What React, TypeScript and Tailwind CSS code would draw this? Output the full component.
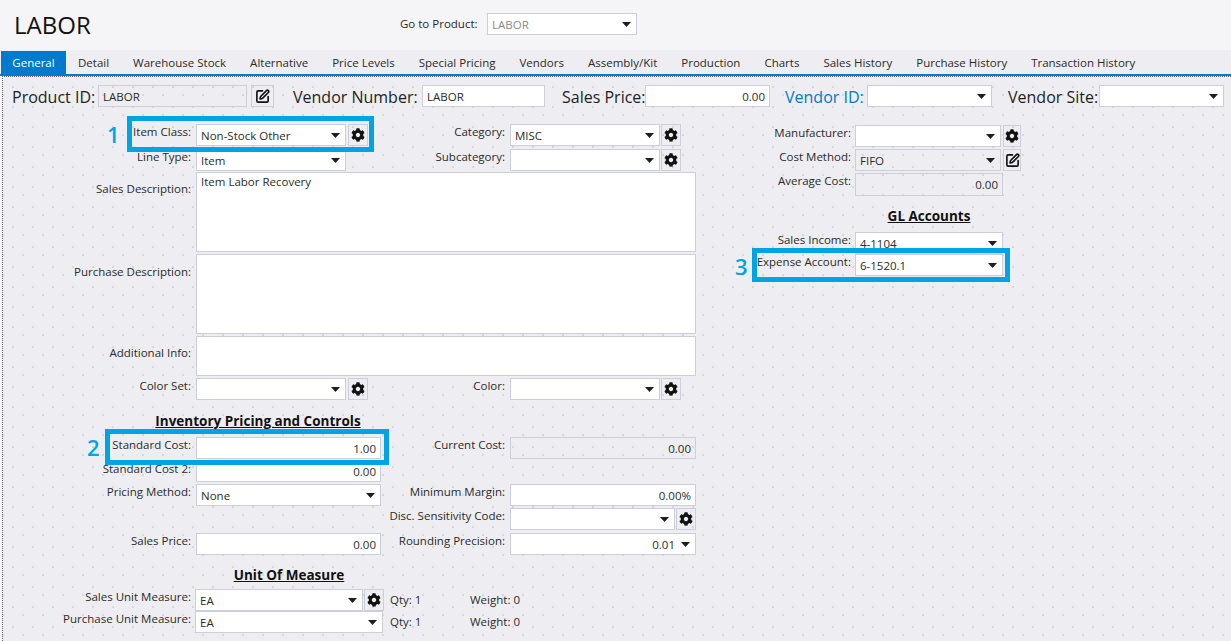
import React from "react";
import { FaCog } from "react-icons/fa";
import { SquarePen } from "lucide-react";

const tabs = ["General","Detail","Warehouse Stock","Alternative","Price Levels","Special Pricing","Vendors","Assembly/Kit","Production","Charts","Sales History","Purchase History","Transaction History"];

function Caret() {
  return <svg width="9" height="5" viewBox="0 0 9 5" className="shrink-0"><path d="M0 0h9L4.5 5z" fill="#1e1e1e" /></svg>;
}

function Sel({ w, h = 22, value = "", disabled = false, align = "left", muted = false }: { w: number; h?: number; value?: string; disabled?: boolean; align?: string; muted?: boolean }) {
  return (
    <div style={{ width: w, height: h }} className={`flex items-center border border-[#cccedb] pl-[4px] pr-[5px] shrink-0 ${disabled ? "" : "bg-white"}`}>
      <span className={`flex-1 truncate pt-px ${align === "right" ? "text-right pr-[6px]" : ""} ${muted ? "text-[#8a8a8a]" : "text-[#2a2a2a]"}`}>{value}</span>
      <Caret />
    </div>
  );
}

function Field({ w, h = 22, value = "", disabled = false, right = false, top = false }: { w: number; h?: number; value?: string; disabled?: boolean; right?: boolean; top?: boolean }) {
  return (
    <div style={{ width: w, height: h }} className={`flex border border-[#cccedb] px-[4px] shrink-0 text-[#2a2a2a] ${top ? "items-start" : "items-center pt-px"} ${right ? "justify-end" : ""} ${disabled ? "" : "bg-white"}`}>
      {value}
    </div>
  );
}

function Gear({ w = 20 }: { w?: number }) {
  return (
    <div style={{ width: w }} className="h-[22px] border border-[#cccedb] flex items-center justify-center shrink-0 text-[#111]">
      <FaCog size={14} />
    </div>
  );
}

function Edit({ w = 20 }: { w?: number }) {
  return (
    <div style={{ width: w }} className="h-[22px] border border-[#cccedb] flex items-center justify-center shrink-0 text-[#111]">
      <SquarePen size={15} strokeWidth={2.6} />
    </div>
  );
}

function Label({ w, children, pt = 0 }: { w: number; children?: React.ReactNode; pt?: number }) {
  return <div style={{ width: w, paddingTop: pt }} className="text-right leading-4 shrink-0 whitespace-nowrap text-[#2a2a2a]">{children}</div>;
}

function Big({ children, w, blue = false }: { children: React.ReactNode; w: number; blue?: boolean }) {
  return <div style={{ width: w }} className={`text-[16px] leading-[22px] shrink-0 whitespace-nowrap pt-[1px] ${blue ? "text-[#007acc]" : "text-[#1e1e1e]"}`}>{children}</div>;
}

function Callout({ n, left, top, w, h, nLeft }: { n: string; left: number; top: number; w: number; h: number; nLeft: number }) {
  return (
    <>
      <div style={{ left: nLeft, top: top + 3 }} className="absolute text-[22px] leading-[30px] font-semibold text-[#00a4e4]">{n}</div>
      <div style={{ left, top, width: w, height: h }} className="absolute border-[5px] border-[#00a4e4] pointer-events-none" />
    </>
  );
}

function Left({ label, children }: { label: string; children?: React.ReactNode }) {
  return (
    <div className="flex gap-[5px] w-[378px] shrink-0">
      <Label w={188}>{label}</Label>
      <div className="flex gap-[2px]">{children}</div>
    </div>
  );
}

function Second({ label, children }: { label: string; children?: React.ReactNode }) {
  return (
    <div className="flex gap-[5px] shrink-0">
      <Label w={124}>{label}</Label>
      <div className="flex gap-[1px]">{children}</div>
    </div>
  );
}

function Heading({ children, className }: { children: React.ReactNode; className: string }) {
  return <div className={`h-5 text-[13.5px] leading-5 font-bold underline text-[#111] text-center ${className}`}>{children}</div>;
}

function RightRow({ label, children, className = "" }: { label: string; children?: React.ReactNode; className?: string }) {
  return (
    <div className={`relative flex gap-[4px] ${className}`}>
      <Label w={155}>{label}</Label>
      <div className="flex gap-[2px]">{children}</div>
    </div>
  );
}

export default function App() {
  return (
    <div className="w-[1231px] h-[641px] overflow-hidden bg-[#f5f5f8] text-[11.5px] font-['Open_Sans','Noto_Sans',sans-serif] text-[#2a2a2a]">
      <header className="h-[50px] flex items-start">
        <div className="w-[400px] pl-[14px] pt-[9px] text-[24px] leading-8 text-[#111]">LABOR</div>
        <div className="pt-[13px] flex">
          <div className="w-[87px] leading-[22px]">Go to Product:</div>
          <Sel w={150} value="LABOR" muted />
        </div>
      </header>

      <nav className="h-[26px] flex items-start pl-px border-b-2 border-[#007acc] bg-[#eeeef2]">
        <div className="h-[24px] mt-px w-[65px] bg-[#007acc] text-white flex items-center justify-center">General</div>
        {tabs.slice(1).map((t) => (
          <div key={t} className="h-[24px] mt-px px-[12px] flex items-center whitespace-nowrap text-[#2a2a2a]">{t}</div>
        ))}
      </nav>

      <main className="ml-[2px] h-[565px] border-l border-t border-dotted border-[#666] bg-[#eeeef2] bg-[radial-gradient(circle,#d5d5dd_0.7px,transparent_1px),radial-gradient(circle,#d5d5dd_0.7px,transparent_1px)] bg-[length:20px_20px] bg-[position:0_0,10px_8px]">
        <section className="flex items-start pt-[8px] pl-[9px]">
          <Big w={86}>Product ID:</Big>
          <Field w={149} value="LABOR" disabled />
          <div className="ml-[4px]"><Edit w={23} /></div>
          <div className="ml-[19px]"><Big w={129}>Vendor Number:</Big></div>
          <Field w={123} value="LABOR" />
          <div className="ml-[17px]"><Big w={83}>Sales Price:</Big></div>
          <Field w={125} value="0.00" right />
          <div className="ml-[15px]"><Big w={82} blue>Vendor ID:</Big></div>
          <Sel w={125} />
          <div className="ml-[16px]"><Big w={91}>Vendor Site:</Big></div>
          <Sel w={125} />
        </section>

        <section className="flex items-start mt-[16px]">
          <div className="w-[693px] shrink-0 flex flex-col">
            <div className="relative flex">
              <Left label="Item Class:"><Sel w={150} value="Non-Stock Other" /><Gear /></Left>
              <Second label="Category:"><Sel w={150} value="MISC" /><Gear /></Second>
              <Callout n="1" nLeft={104} left={124} top={-8} w={247} h={36} />
            </div>
            <div className="flex mt-[3px]">
              <Left label="Line Type:"><Sel w={150} value="Item" /></Left>
              <Second label="Subcategory:"><Sel w={150} /><Gear /></Second>
            </div>
            <div className="flex gap-[5px] mt-px">
              <Label w={188} pt={9}>Sales Description:</Label>
              <Field w={500} h={80} value="Item Labor Recovery" top />
            </div>
            <div className="flex gap-[5px] mt-[2px]">
              <Label w={188} pt={10}>Purchase Description:</Label>
              <Field w={500} h={80} />
            </div>
            <div className="flex gap-[5px] mt-[2px]">
              <Label w={188} pt={9}>Additional Info:</Label>
              <Field w={500} h={40} />
            </div>
            <div className="flex mt-[2px]">
              <Left label="Color Set:"><Sel w={150} /><Gear /></Left>
              <Second label="Color:"><Sel w={150} /><Gear /></Second>
            </div>
            <Heading className="w-[510px] mt-[11px]">Inventory Pricing and Controls</Heading>
            <div className="relative flex mt-[6px]">
              <Left label="Standard Cost:"><Field w={185} value="1.00" right /></Left>
              <Second label="Current Cost:"><Field w={186} value="0.00" right disabled /></Second>
              <Callout n="2" nLeft={84} left={102} top={-8} w={284} h={36} />
            </div>
            <div className="flex mt-[2px]">
              <Left label="Standard Cost 2:"><Field w={185} h={21} value="0.00" right /></Left>
            </div>
            <div className="flex mt-[2px]">
              <Left label="Pricing Method:"><Sel w={185} value="None" /></Left>
              <Second label="Minimum Margin:"><Field w={186} value="0.00%" right /></Second>
            </div>
            <div className="flex mt-[2px]">
              <div className="w-[378px] shrink-0" />
              <Second label="Disc. Sensitivity Code:"><Sel w={165} /><Gear /></Second>
            </div>
            <div className="flex mt-[3px]">
              <Left label="Sales Price:"><Field w={185} value="0.00" right /></Left>
              <Second label="Rounding Precision:"><Sel w={186} value="0.01" align="right" /></Second>
            </div>
            <Heading className="w-[572px] mt-[10px]">Unit Of Measure</Heading>
            <div className="flex mt-[4px]">
              <Left label="Sales Unit Measure:">
                <div className="-ml-px flex gap-[1px]"><Sel w={168} value="EA" /><Gear /></div>
              </Left>
              <div className="ml-[9px] w-[80px] leading-4 pt-[3px]">Qty: 1</div>
              <div className="leading-4 pt-[3px]">Weight: 0</div>
            </div>
            <div className="flex">
              <Left label="Purchase Unit Measure:">
                <div className="-ml-px"><Sel w={188} value="EA" /></div>
              </Left>
              <div className="ml-[9px] w-[80px] leading-4 pt-[3px]">Qty: 1</div>
              <div className="leading-4 pt-[3px]">Weight: 0</div>
            </div>
          </div>

          <div className="flex flex-col mt-px">
            <RightRow label="Manufacturer:"><Sel w={146} /><Gear w={18} /></RightRow>
            <RightRow label="Cost Method:" className="mt-[2px]"><Sel w={146} value="FIFO" disabled /><Edit w={18} /></RightRow>
            <RightRow label="Average Cost:" className="mt-[2px]"><Field w={148} h={23} value="0.00" right disabled /></RightRow>
            <Heading className="w-[466px] mt-[10px]">GL Accounts</Heading>
            <RightRow label="Sales Income:" className="mt-[6px]"><Sel w={148} value="4-1104" /></RightRow>
            <RightRow label="Expense Account:">
              <Sel w={148} value="6-1520.1" />
              <Callout n="3" nLeft={39} left={56} top={-6} w={258} h={34} />
            </RightRow>
          </div>
        </section>
      </main>
    </div>
  );
}
